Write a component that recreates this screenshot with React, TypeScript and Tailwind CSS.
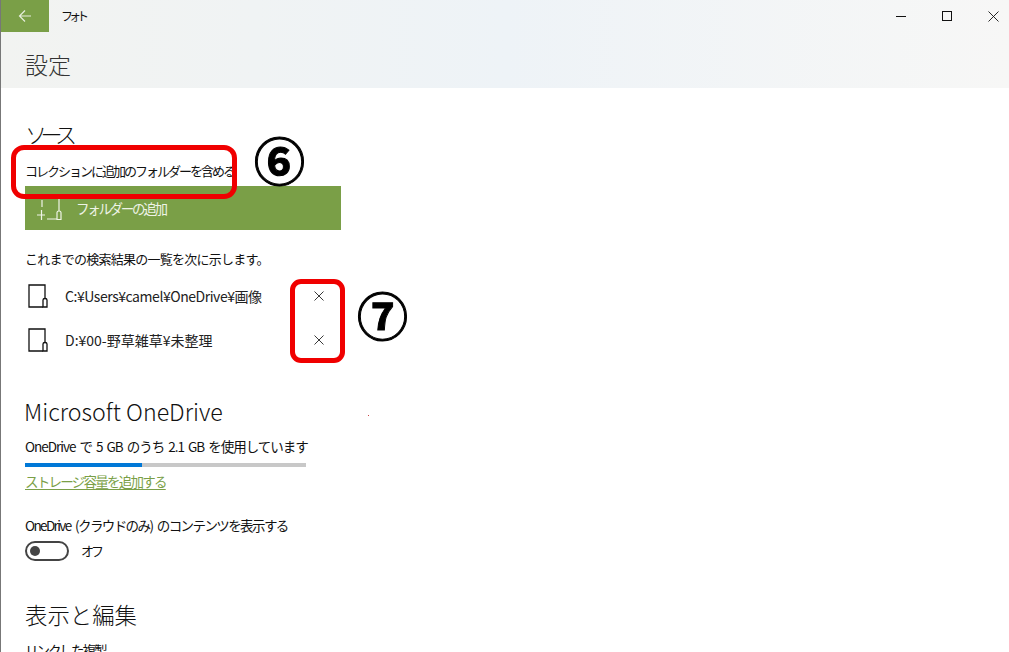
const jp = "font-['Noto_Sans_CJK_JP','Noto_Sans',sans-serif]";

function FolderIcon() {
  return (
    <svg width="20" height="24" viewBox="0 0 20 24" fill="none" stroke="#111" strokeWidth="1.3" className="shrink-0">
      <path d="M17 14.5V1H1V23H15" />
      <path d="M15 23V16Q15 14.5 17 14.5T19 16V23Z" />
    </svg>
  );
}

function CloseIcon() {
  return (
    <svg width="10" height="10" viewBox="0 0 10 10" stroke="#222" strokeWidth="0.9" className="shrink-0">
      <path d="M0.5 0.5L9.5 9.5M9.5 0.5L0.5 9.5" />
    </svg>
  );
}

function SourceRow({ path, spacing }: { path: string; spacing: string }) {
  return (
    <div className="flex h-[44px] w-[299px] items-center">
      <div className="w-[40px] pl-[3px]">
        <FolderIcon />
      </div>
      <span className={`flex-1 text-[14px] text-[#222] ${spacing}`}>{path}</span>
      <CloseIcon />
    </div>
  );
}

export default function App() {
  return (
    <div className={`relative h-[652px] w-[1009px] overflow-hidden border-l border-l-[#777] bg-white ${jp} text-[#111]`}>
      {/* title bar + page header */}
      <header className="h-[88px] bg-gradient-to-r from-[#f2f3f1] via-[#eef3f7] to-[#f7f7f6]">
        <div className="flex h-[32px] items-center">
          <button type="button" className="flex h-[32px] w-[48px] items-center justify-center bg-[#7a9f47]">
            <svg width="14" height="14" viewBox="0 0 14 14" fill="none" stroke="#e6eedb" strokeWidth="1.2">
              <path d="M13 7H1.5M7 1.5L1.5 7L7 12.5" />
            </svg>
          </button>
          <span className="ml-[12px] text-[12px] tracking-[-4px]">フォト</span>
          <div className="ml-auto flex items-center">
            <svg width="10" height="10" viewBox="0 0 10 10" stroke="#111" className="mr-[36px]">
              <path d="M0 5.5H10" />
            </svg>
            <svg width="10" height="10" viewBox="0 0 10 10" fill="none" stroke="#111" className="mr-[36px]">
              <rect x="0.5" y="0.5" width="9" height="9" />
            </svg>
            <svg width="11" height="11" viewBox="0 0 11 11" stroke="#111" strokeWidth="0.9" className="mr-[10px]">
              <path d="M0.5 0.5L10.5 10.5M10.5 0.5L0.5 10.5" />
            </svg>
          </div>
        </div>
        <h1 className="mt-[13px] pl-[24px] text-[23px] leading-[38px] font-light text-[#333]">設定</h1>
      </header>

      <main className="pl-[24px]">
        <h2 className="mt-[30px] text-[22px] leading-[30px] font-light tracking-[-6.5px]">ソース</h2>
        <p className="mt-[13px] text-[13px] leading-[20px] tracking-[-2px]">コレクションに追加のフォルダーを含める</p>
        <button type="button" className="mt-[5px] flex h-[44px] w-[316px] items-center bg-[#7a9f47] text-[13.5px] text-[#eef3e6]">
          <svg width="26" height="24" viewBox="0 0 26 24" fill="none" stroke="#eef3e6" strokeWidth="1.2" className="ml-[11px] shrink-0">
            <path d="M6 4V11M23 0V15M1 19H9M5.5 14V24M11 23H21" />
            <path d="M21 23.5V16.5Q21 15 23 15T25 16.5V23.5Z" />
          </svg>
          <span className="ml-[14px] tracking-[-2.3px]">フォルダーの追加</span>
        </button>

        <p className="mt-[19px] text-[13px] leading-[20px] tracking-[-0.75px]">これまでの検索結果の一覧を次に示します。</p>
        <div className="mt-[5px]">
          <SourceRow path="C:¥Users¥camel¥OneDrive¥画像" spacing="tracking-[-0.45px]" />
          <SourceRow path="D:¥00-野草雑草¥未整理" spacing="tracking-normal" />
        </div>

        <h2 className="mt-[33px] -ml-px text-[23.2px] leading-[32px] font-light">Microsoft OneDrive</h2>
        <p className="mt-[9px] text-[13.5px] leading-[20px] tracking-[-1px] [word-spacing:2px]">OneDrive で 5 GB のうち 2.1 GB を使用しています</p>
        <div className="mt-[7px] h-[4px] w-[281px] bg-[#c8c8c8]">
          <div className="h-full w-[117px] bg-[#0078d7]" />
        </div>
        <a href="#" className="mt-[4px] block w-fit text-[13.5px] leading-[20px] tracking-[-1.75px] text-[#7a9f47] underline underline-offset-2">
          ストレージ容量を追加する
        </a>

        <p className="mt-[24px] text-[13.5px] leading-[20px] tracking-[-1.6px] [word-spacing:3px]">OneDrive (クラウドのみ) のコンテンツを表示する</p>
        <div className="mt-[6px] flex items-center">
          <div className="flex h-[20px] w-[44px] items-center rounded-full border-2 border-[#444] pl-[3px]">
            <div className="h-[10px] w-[10px] rounded-full bg-[#444]" />
          </div>
          <span className="ml-[12px] text-[13px] tracking-[-3px]">オフ</span>
        </div>

        <h2 className="mt-[36px] text-[22.4px] leading-[34px] font-light">表示と編集</h2>
        <p className="mt-[9px] text-[13.5px] leading-[20px] tracking-[-2px]">リンクした複製</p>
      </main>

      {/* red annotations drawn over the screenshot */}
      <div className="absolute left-[10px] top-[145px] h-[54px] w-[226px] rounded-[13px] border-[5px] border-[#f00000]" />
      <div className="absolute left-[289px] top-[279px] h-[84px] w-[55px] rounded-[11px] border-[5px] border-[#f00000]" />
      <span className="absolute left-[253px] top-[125px] text-[51px] leading-[68px] font-bold text-black [-webkit-text-stroke:1px_black]">⑥</span>
      <span className="absolute left-[356px] top-[280px] text-[51px] leading-[68px] font-bold text-black [-webkit-text-stroke:1px_black]">⑦</span>
      <div className="absolute left-[367px] top-[415px] h-px w-px bg-[#c44]" />
    </div>
  );
}
